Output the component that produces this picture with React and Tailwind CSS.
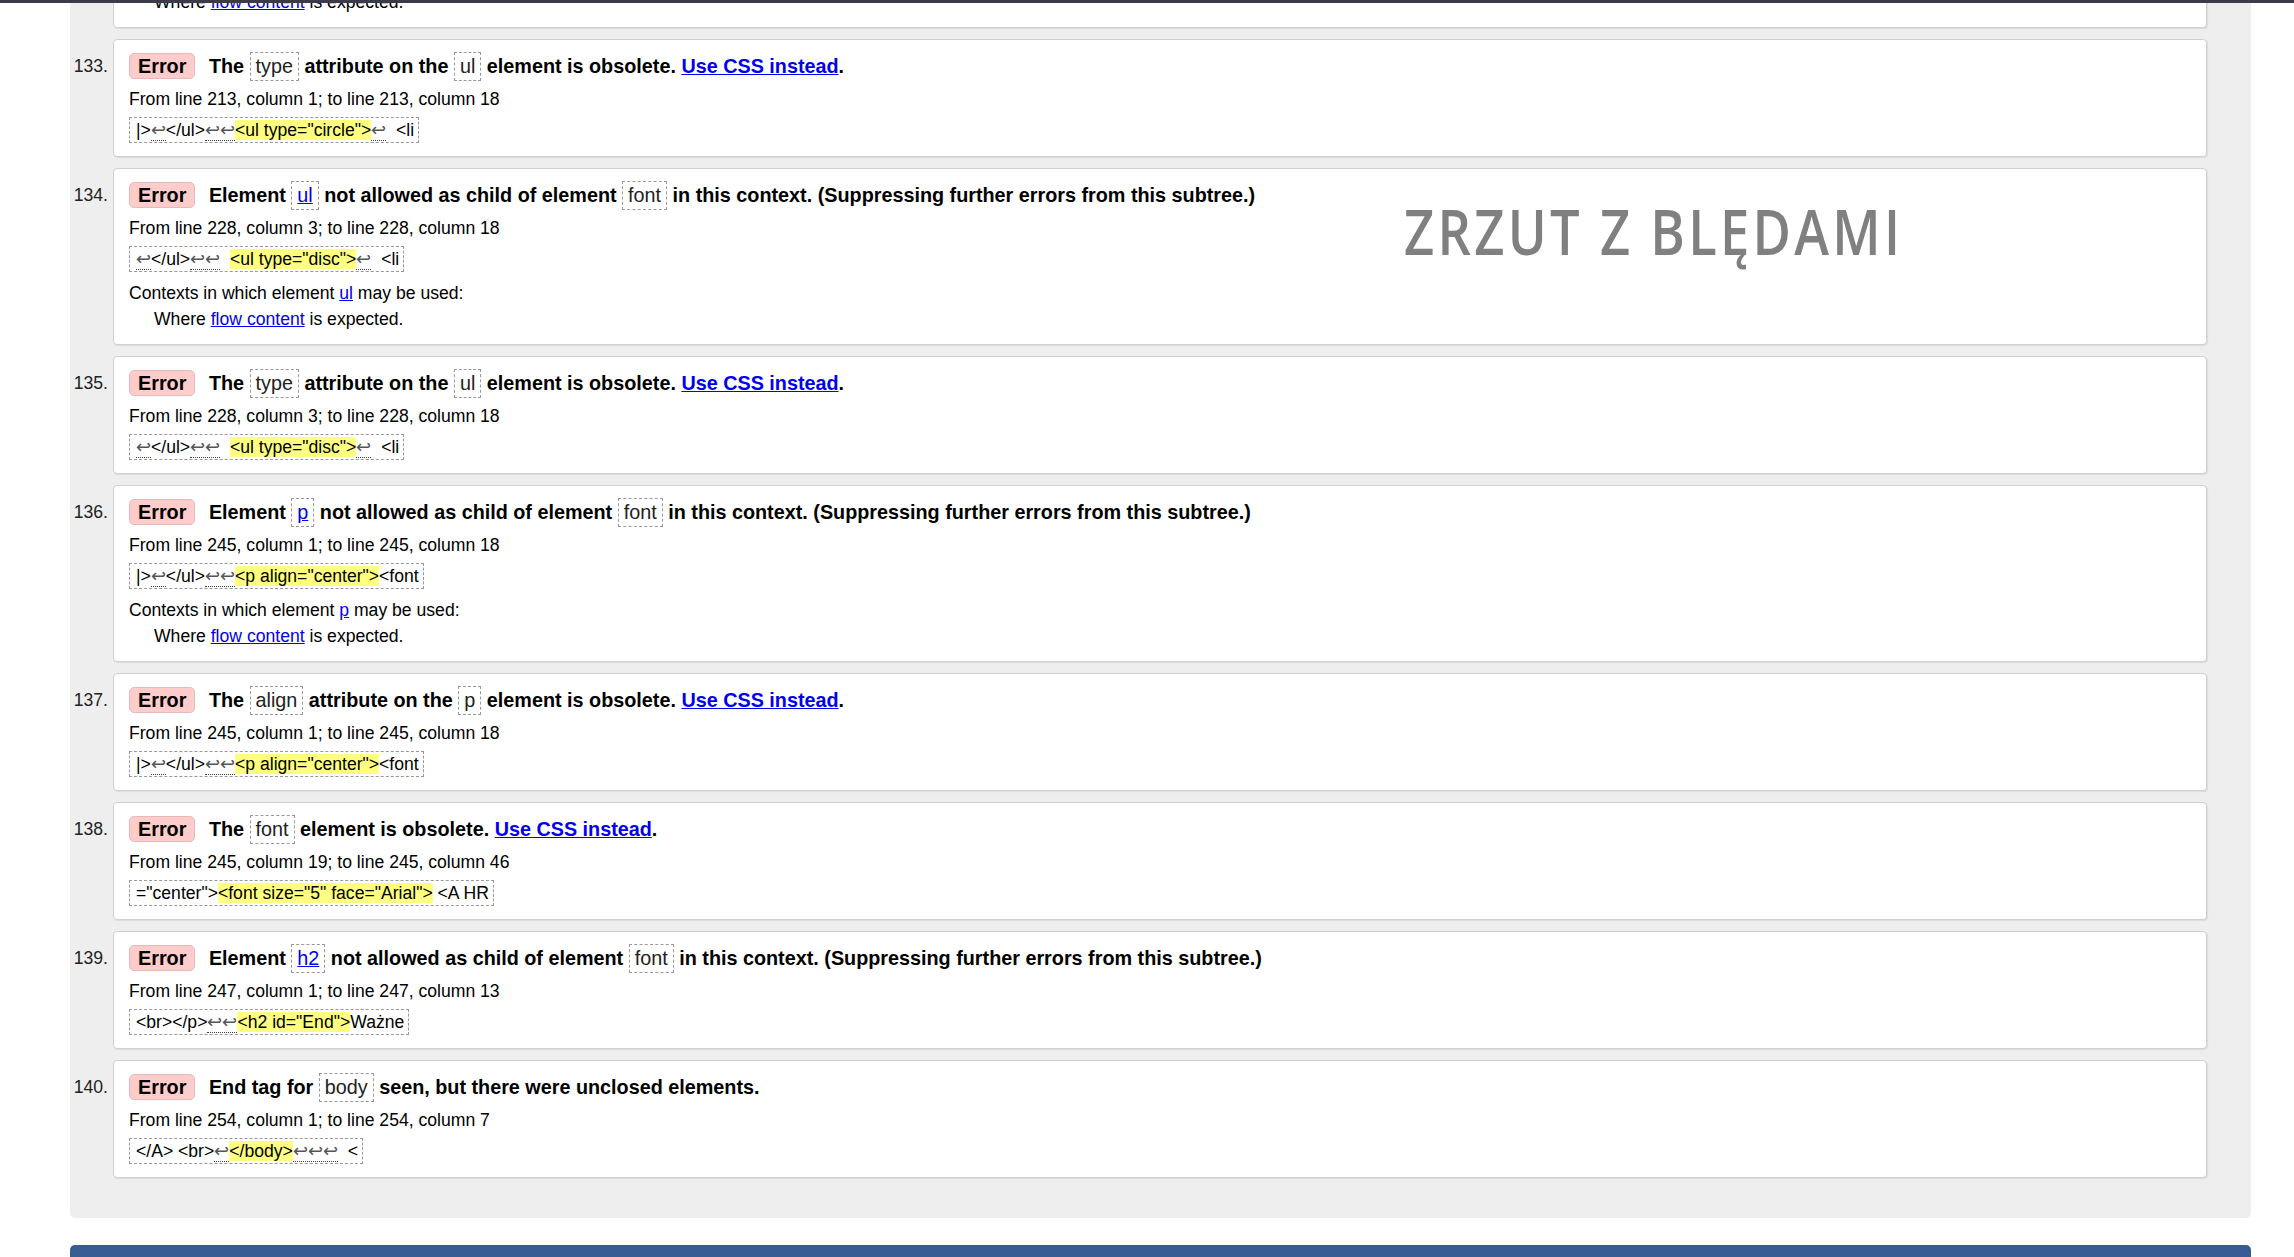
import React from 'react';

const font = { fontFamily: '"Liberation Sans", Arial, sans-serif' };

function Lf({ n = 1 }) {
  return <span className="border-b border-dotted border-[#444] text-[#555]">{'↩'.repeat(n)}</span>;
}

function Hl({ children }) {
  return <span className="bg-[#ffff80]">{children}</span>;
}

function Code({ children, link }) {
  return (
    <span className="inline-block border border-dashed border-[#999] px-[5px] leading-[27px] font-normal text-[#222]">
      {link ? <a className="text-[#0000ee] underline">{children}</a> : children}
    </span>
  );
}

function CssLink() {
  return <a className="text-[#0000ee] underline">Use CSS instead</a>;
}

function Headline({ item }) {
  if (item.kind === 'attr') {
    return (
      <>
        The <Code>{item.attr}</Code> attribute on the <Code>{item.el}</Code> element is obsolete. <CssLink />.
      </>
    );
  }
  if (item.kind === 'el') {
    return (
      <>
        The <Code>{item.el}</Code> element is obsolete. <CssLink />.
      </>
    );
  }
  if (item.kind === 'child') {
    return (
      <>
        Element <Code link>{item.el}</Code> not allowed as child of element <Code>{item.parent}</Code> in this context. (Suppressing further errors from this subtree.)
      </>
    );
  }
  return (
    <>
      End tag for <Code>{item.el}</Code> seen, but there were unclosed elements.
    </>
  );
}

function Message({ item }) {
  return (
    <div className="flex items-start">
      <div className="w-[43px] shrink-0 pr-[5px] pt-[12px] text-right leading-[30px] text-[17.6px] text-[#222]">{item.n}.</div>
      <div className="flex-1 rounded-[4px] border border-[#d0d0d0] bg-white px-[15px] pt-[11px] pb-[13px] shadow-[1px_1px_1px_rgba(0,0,0,0.08)]">
        <div className="text-[19.8px] font-bold leading-[30px] text-black">
          <span className="mr-[8px] inline-block rounded-[5px] border border-[#e9b8b8] bg-[#ffcccc] px-[8px] leading-[24px]">Error</span>{' '}
          <Headline item={item} />
        </div>
        <div className="mt-[4px] text-[17.6px] leading-[28px] text-black">{item.from}</div>
        <div className="mt-[4px] flex">
          <span className="border border-dashed border-[#999] pl-[6px] pr-[4px] text-[17.6px] leading-[24px] whitespace-pre text-black">
            {item.extract}
          </span>
        </div>
        {item.context && (
          <>
            <div className="mt-[8px] text-[17.6px] leading-[26px] text-black">
              Contexts in which element <a className="text-[#0000ee] underline">{item.el}</a> may be used:
            </div>
            <div className="pl-[25px] text-[17.6px] leading-[26px] text-black">
              Where <a className="text-[#0000ee] underline">flow content</a> is expected.
            </div>
            <div className="-mt-[1px]" />
          </>
        )}
      </div>
    </div>
  );
}

const messages = [
  {
    n: 132, kind: 'child', el: 'ul', parent: 'font', context: true,
    from: 'From line 213, column 1; to line 213, column 18',
    extract: <>|&gt;<Lf />&lt;/ul&gt;<Lf n={2} /><Hl>&lt;ul type="circle"&gt;</Hl><Lf />  &lt;li</>,
  },
  {
    n: 133, kind: 'attr', attr: 'type', el: 'ul',
    from: 'From line 213, column 1; to line 213, column 18',
    extract: <>|&gt;<Lf />&lt;/ul&gt;<Lf n={2} /><Hl>&lt;ul type="circle"&gt;</Hl><Lf />  &lt;li</>,
  },
  {
    n: 134, kind: 'child', el: 'ul', parent: 'font', context: true,
    from: 'From line 228, column 3; to line 228, column 18',
    extract: <><Lf />&lt;/ul&gt;<Lf n={2} />  <Hl>&lt;ul type="disc"&gt;</Hl><Lf />  &lt;li</>,
  },
  {
    n: 135, kind: 'attr', attr: 'type', el: 'ul',
    from: 'From line 228, column 3; to line 228, column 18',
    extract: <><Lf />&lt;/ul&gt;<Lf n={2} />  <Hl>&lt;ul type="disc"&gt;</Hl><Lf />  &lt;li</>,
  },
  {
    n: 136, kind: 'child', el: 'p', parent: 'font', context: true,
    from: 'From line 245, column 1; to line 245, column 18',
    extract: <>|&gt;<Lf />&lt;/ul&gt;<Lf n={2} /><Hl>&lt;p align="center"&gt;</Hl>&lt;font</>,
  },
  {
    n: 137, kind: 'attr', attr: 'align', el: 'p',
    from: 'From line 245, column 1; to line 245, column 18',
    extract: <>|&gt;<Lf />&lt;/ul&gt;<Lf n={2} /><Hl>&lt;p align="center"&gt;</Hl>&lt;font</>,
  },
  {
    n: 138, kind: 'el', el: 'font',
    from: 'From line 245, column 19; to line 245, column 46',
    extract: <>="center"&gt;<Hl>&lt;font size="5" face="Arial"&gt;</Hl> &lt;A HR</>,
  },
  {
    n: 139, kind: 'child', el: 'h2', parent: 'font',
    from: 'From line 247, column 1; to line 247, column 13',
    extract: <>&lt;br&gt;&lt;/p&gt;<Lf n={2} /><Hl>&lt;h2 id="End"&gt;</Hl>Ważne</>,
  },
  {
    n: 140, kind: 'end', el: 'body',
    from: 'From line 254, column 1; to line 254, column 7',
    extract: <>&lt;/A&gt; &lt;br&gt;<Lf /><Hl>&lt;/body&gt;</Hl><Lf n={3} />  &lt;</>,
  },
];

export default function App() {
  return (
    <div className="relative min-h-screen overflow-hidden bg-white" style={font}>
      <div className="absolute left-0 right-0 top-0 z-10 h-[3px] bg-[#3c3949]" />

      <div className="ml-[70px] w-[2181px] -mt-[149px] rounded-b-[5px] bg-[#eeeeee] pr-[44px] pb-[40px]">
        <div className="flex flex-col gap-[11px]">
          {messages.map((m) => (
            <Message key={m.n} item={m} />
          ))}
        </div>
      </div>

      <div className="ml-[70px] mt-[27px] h-[60px] w-[2181px] rounded-t-[5px] bg-[#365c93] px-[16px] pt-[8px] text-[19.8px] font-bold text-white">
        Document checking completed.
      </div>

      <div
        className="absolute left-[1404px] top-[199px] origin-left scale-x-[0.82] text-[64px] font-semibold leading-[64px] tracking-[4px] whitespace-nowrap text-[#808080]"
        style={{ fontFamily: '"Open Sans", sans-serif' }}
      >
        ZRZUT Z BLĘDAMI
      </div>
    </div>
  );
}
